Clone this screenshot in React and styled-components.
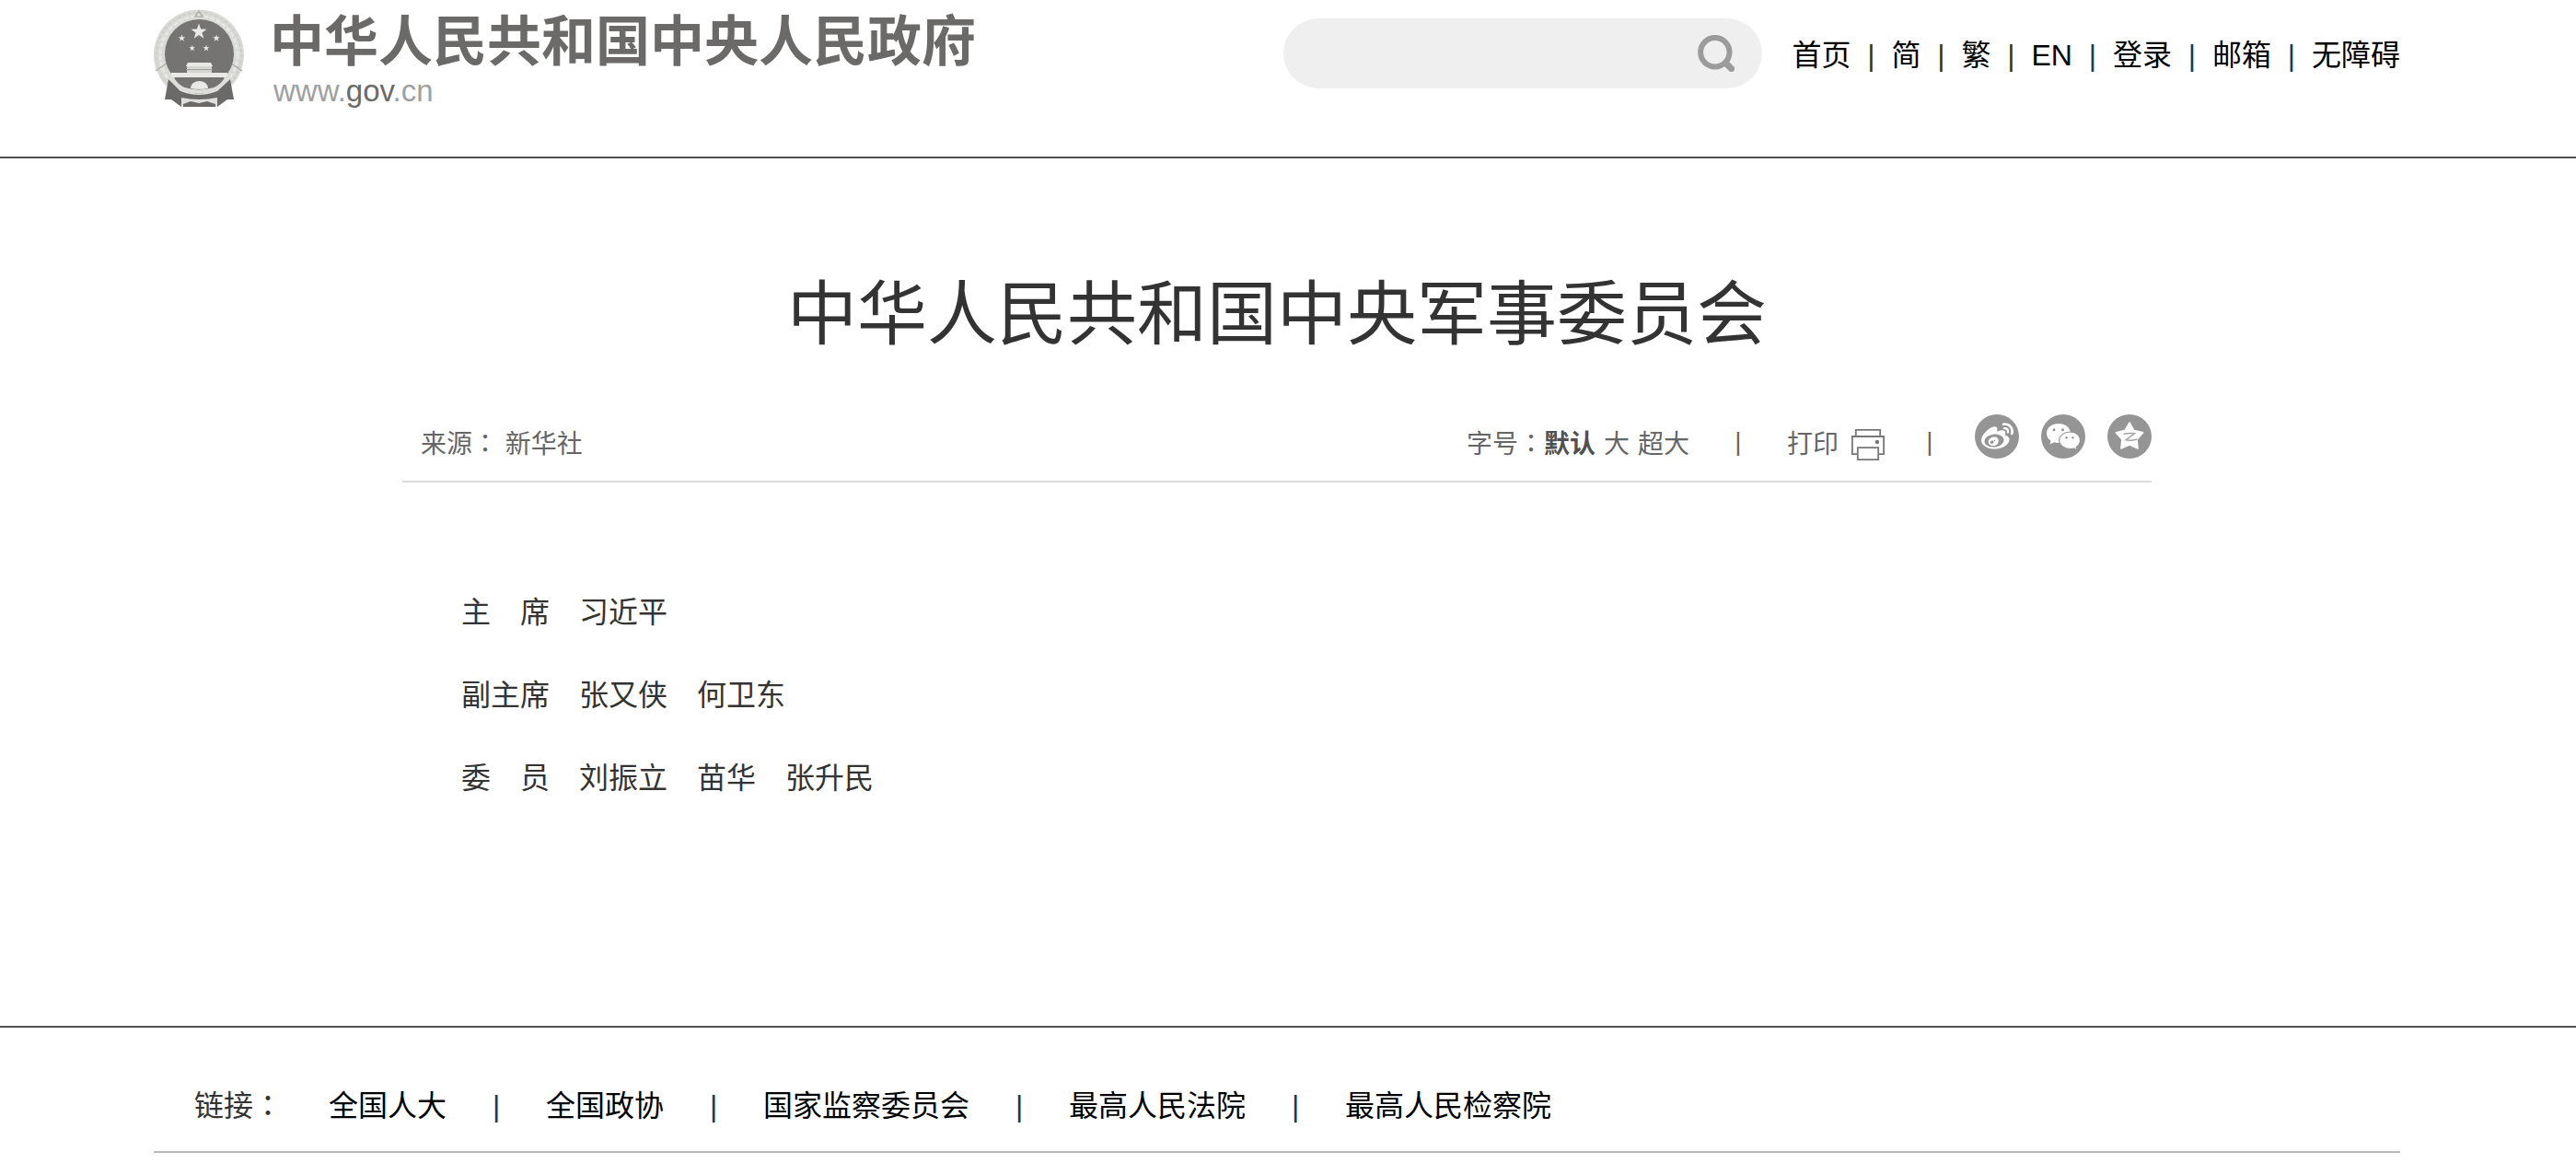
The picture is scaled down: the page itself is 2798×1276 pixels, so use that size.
import React, { Fragment } from "react";
import styled, { createGlobalStyle } from "styled-components";
import { FaWeibo } from "react-icons/fa";

const GlobalStyle = createGlobalStyle`
  body {
    margin: 0;
    background: #fff;
    color: #333;
    font-family: "Liberation Sans", "Noto Sans CJK SC", sans-serif;
    font-size: 32px;
  }

  a {
    color: #000;
    text-decoration: none;
  }

  button {
    padding: 0;
    border: 0;
    background: none;
    color: inherit;
    font: inherit;
    cursor: pointer;
  }
`;

const Header = styled.header`
  padding-right: 24px;
  border-bottom: 2px solid #535253;
`;

const HeaderInner = styled.div`
  display: flex;
  justify-content: space-between;
  align-items: flex-start;
  box-sizing: border-box;
  width: 88%;
  max-width: 2440px;
  min-height: 170px;
  margin: 0 auto;
  padding-top: 10px;
`;

const Brand = styled.a`
  display: flex;
  gap: 28px;
  color: #6b6a69;
`;

const BrandName = styled.div`
  font-size: 59px;
  font-weight: bold;
  line-height: 72px;
  white-space: nowrap;
`;

const BrandUrl = styled.div`
  padding-left: 4px;
  font-size: 33px;
  line-height: 34px;
  color: #a0a0a0;

  span {
    color: #6b6a69;
  }
`;

const Tools = styled.div`
  display: flex;
  align-items: flex-start;
  gap: 32px;
  padding-top: 10px;
`;

const SearchForm = styled.form`
  display: flex;
  align-items: center;
  box-sizing: border-box;
  width: 520px;
  height: 76px;
  padding: 0 30px;
  border-radius: 38px;
  background: #efefef;
`;

const SearchInput = styled.input`
  flex: 1;
  min-width: 0;
  border: 0;
  outline: none;
  background: transparent;
  color: #333;
  font: inherit;
`;

const SearchButton = styled.button`
  display: flex;
`;

const TopNav = styled.nav`
  display: flex;
  line-height: 80px;
  white-space: nowrap;
`;

const Divider = styled.span`
  width: ${(props) => props.$width};
  text-align: center;
`;

const Main = styled.main`
  padding: 116px 24px 224px 0;
`;

const Article = styled.article`
  width: 70%;
  max-width: 1900px;
  margin: 0 auto;
`;

const Title = styled.h1`
  margin: 0 0 54px;
  font-size: 76px;
  font-weight: normal;
  line-height: 108px;
  text-align: center;
`;

const Meta = styled.div`
  display: flex;
  justify-content: space-between;
  min-height: 72px;
  padding-left: 20px;
  border-bottom: 2px solid #dcdcdc;
  color: #666;
  font-size: 28px;
  line-height: 66px;
`;

// full-width colon centred in its box
const Colon = styled.span`
  font-family: "Noto Sans CJK TC", sans-serif;
  line-height: 1;
`;

const MetaTools = styled.div`
  display: flex;
  align-items: flex-start;

  ${Divider} {
    line-height: 60px;
  }
`;

const SizePicker = styled.div`
  display: flex;
`;

const SizeButton = styled.button`
  margin-right: 9px;
  color: ${(props) => (props.$active ? "#505050" : "inherit")};
  font-weight: ${(props) => (props.$active ? "bold" : "normal")};

  &:last-child {
    margin-right: 0;
  }
`;

const PrintButton = styled.button`
  display: flex;
  align-items: center;
  gap: 14px;
`;

const ShareList = styled.div`
  display: flex;
  gap: 24px;
`;

const ShareButton = styled.button`
  display: flex;
  align-items: center;
  justify-content: center;
  width: 48px;
  height: 48px;
  border-radius: 50%;
  background: #959595;
  color: #fff;
`;

const Content = styled.div`
  padding-top: 96px;

  p {
    margin: 0;
    line-height: 90px;
    text-indent: 2em;
  }
`;

const Footer = styled.footer`
  padding: 60px 24px 24px 0;
  border-top: 2px solid #535253;
`;

const FooterLinks = styled.nav`
  display: flex;
  flex-wrap: wrap;
  box-sizing: border-box;
  width: 88%;
  max-width: 2440px;
  margin: 0 auto;
  padding: 0 44px 24px;
  border-bottom: 2px solid #b8b8b8;
  line-height: 50px;
`;

const FooterLabel = styled.span`
  margin-right: 50px;
`;

const topLinks = ["首页", "简", "繁", "EN", "登录", "邮箱", "无障碍"];

const footerLinks = ["全国人大", "全国政协", "国家监察委员会", "最高人民法院", "最高人民检察院"];

const sizes = ["默认", "大", "超大"];

const people = [
  "主　席　习近平",
  "副主席　张又侠　何卫东",
  "委　员　刘振立　苗华　张升民",
];

const starPoints = (cx, cy, r, inner = 0.4) => {
  const points = [];
  for (let i = 0; i < 10; i++) {
    const radius = i % 2 ? r * inner : r;
    const angle = (Math.PI / 5) * i - Math.PI / 2;
    points.push(`${(cx + radius * Math.cos(angle)).toFixed(2)},${(cy + radius * Math.sin(angle)).toFixed(2)}`);
  }
  return points.join(" ");
};

const Emblem = () => (
  <svg width="98" height="106" viewBox="0 0 98 106" aria-hidden="true">
    <circle cx="49" cy="49.5" r="49" fill="#d9d9d6" />
    <circle cx="49" cy="49.5" r="46" fill="none" stroke="#cbcbc8" strokeWidth="1.5" strokeDasharray="4 2" />
    <circle cx="49" cy="49.5" r="42" fill="none" stroke="#e6e6e3" strokeWidth="3" strokeDasharray="5 2" />
    <path d="M49 2 45 8h8zM2 67l13-9M96 67l-13-9" fill="none" stroke="#b0b0ad" strokeWidth="1.5" />
    <circle cx="49.5" cy="48.5" r="37.5" fill="#757472" />
    <g fill="#e9e9e7">
      <polygon points={starPoints(49, 24.5, 9)} />
      <polygon points={starPoints(30.5, 31.5, 4)} />
      <polygon points={starPoints(68, 31.5, 4)} />
      <polygon points={starPoints(41.7, 42.3, 3.6)} />
      <polygon points={starPoints(57, 42.3, 3.6)} />
      <path d="M37 58h25l2 4H35z" />
      <path d="M36 62h27v7H36z" fill="#d4d4d1" />
      <path d="M19 69h61v5H19z" />
    </g>
    <path d="M35 65.500h29" stroke="#a09f9d" strokeWidth="1" />
    <path d="M16 76 12 98l7 0 11 8h39l11-8h7l-4-22-14 13q-20 8-40 0z" fill="#6b6a68" />
    <path d="M20 75h59L67 88q-18 7-36 0z" fill="#757472" />
    <path d="M19 73q4 9 14 14 16 5 33 0 10-5 14-14" fill="none" stroke="#dededb" strokeWidth="4" />
    <path d="M40 86a9.500 8 0 0 1 19 0q-9.500 2-19 0z" fill="#e9e9e7" />
    <path d="M17 86q8 12 32 12t32-12" fill="none" stroke="#6b6a68" strokeWidth="7" />
    <path d="M30 96q19 4 39 0v10H30z" fill="#dededb" />
    <path d="M32 106v-3l8-3 9 2 9-2 9 3v3z" fill="#6b6a68" />
  </svg>
);

const SearchIcon = () => (
  <svg width="40" height="40" viewBox="0 0 40 40" fill="none" stroke="#9b9b9b" aria-hidden="true">
    <circle cx="18.800" cy="18.700" r="15.700" strokeWidth="6" />
    <path d="m30 30 9 9" strokeWidth="7" />
  </svg>
);

const PrinterIcon = () => (
  <svg width="36" height="34" viewBox="0 0 36 34" fill="#fff" stroke="#777" strokeWidth="1.800" aria-hidden="true">
    <path d="M4.800 8V.9h26.400V8" />
    <path d="M6 27.200H.9V8h34.200v19.200H30" />
    <path d="M6.800 20.200h22.400v13H6.800z" />
    <circle cx="28" cy="14" r="1.300" fill="#666" />
  </svg>
);

const WechatIcon = () => (
  <svg width="48" height="48" viewBox="0 0 48 48" aria-hidden="true">
    <path d="M19 10C11.500 10 6 14.500 6 20.500c0 3.500 1.800 6.200 4.500 8.200L9.500 32.500l4.500-2.300c1.600.5 3.200.7 5 .7 7.500 0 13-4.600 13-10.400S26.500 10 19 10z" fill="#fff" />
    <path d="M31.500 19C25 19 19.700 23 19.700 28.200s5.300 9.300 11.800 9.300c1.400 0 2.700-.2 3.900-.5l3.800 2-1-3.400c2.600-1.700 4.300-4.300 4.300-7.400C42.500 23 38 19 31.500 19z" fill="#fff" stroke="#959595" strokeWidth="1.200" />
    <g fill="#959595">
      <circle cx="14" cy="16.800" r="1.500" />
      <circle cx="23.500" cy="16.800" r="1.500" />
      <circle cx="27.500" cy="25.300" r="1.200" />
      <circle cx="34.500" cy="25.300" r="1.200" />
    </g>
  </svg>
);

const QzoneIcon = () => (
  <svg width="48" height="48" viewBox="0 0 48 48" aria-hidden="true">
    <polygon points={starPoints(24, 24.500, 15.500, 0.55)} fill="#fff" stroke="#fff" strokeWidth="1.500" strokeLinejoin="round" />
    <path d="M17.500 21.500q6-1.500 12-.7l-9.500 7q6 1.200 12.500-.8" fill="none" stroke="#a5a5a5" strokeWidth="1.500" />
  </svg>
);

const App = () => {
  return (
    <>
      <GlobalStyle />
      <Header>
        <HeaderInner>
          <Brand href="#">
            <Emblem />
            <div>
              <BrandName>中华人民共和国中央人民政府</BrandName>
              <BrandUrl>
                www.<span>gov</span>.cn
              </BrandUrl>
            </div>
          </Brand>
          <Tools>
            <SearchForm role="search" onSubmit={(e) => e.preventDefault()}>
              <SearchInput type="text" aria-label="搜索" />
              <SearchButton type="submit" aria-label="搜索">
                <SearchIcon />
              </SearchButton>
            </SearchForm>
            <TopNav>
              {topLinks.map((text, i) => (
                <Fragment key={text}>
                  {i > 0 && <Divider $width="44px">|</Divider>}
                  <a href="#">{text}</a>
                </Fragment>
              ))}
            </TopNav>
          </Tools>
        </HeaderInner>
      </Header>

      <Main>
        <Article>
          <Title>中华人民共和国中央军事委员会</Title>
          <Meta>
            <span>
              来源<Colon>：</Colon> 新华社
            </span>
            <MetaTools>
              <SizePicker>
                <span>
                  字号<Colon>：</Colon>
                </span>
                {sizes.map((size, i) => (
                  <SizeButton key={size} type="button" $active={i === 0}>
                    {size}
                  </SizeButton>
                ))}
              </SizePicker>
              <Divider $width="106px">|</Divider>
              <PrintButton type="button">
                打印
                <PrinterIcon />
              </PrintButton>
              <Divider $width="98px">|</Divider>
              <ShareList>
                <ShareButton type="button" aria-label="微博">
                  <FaWeibo size={35} />
                </ShareButton>
                <ShareButton type="button" aria-label="微信">
                  <WechatIcon />
                </ShareButton>
                <ShareButton type="button" aria-label="QQ空间">
                  <QzoneIcon />
                </ShareButton>
              </ShareList>
            </MetaTools>
          </Meta>
          <Content>
            {people.map((line) => (
              <p key={line}>{line}</p>
            ))}
          </Content>
        </Article>
      </Main>

      <Footer>
        <FooterLinks>
          <FooterLabel>
            链接<Colon>：</Colon>
          </FooterLabel>
          {footerLinks.map((text, i) => (
            <Fragment key={text}>
              {i > 0 && <Divider $width="108px">|</Divider>}
              <a href="#">{text}</a>
            </Fragment>
          ))}
        </FooterLinks>
      </Footer>
    </>
  );
};

export default App;
